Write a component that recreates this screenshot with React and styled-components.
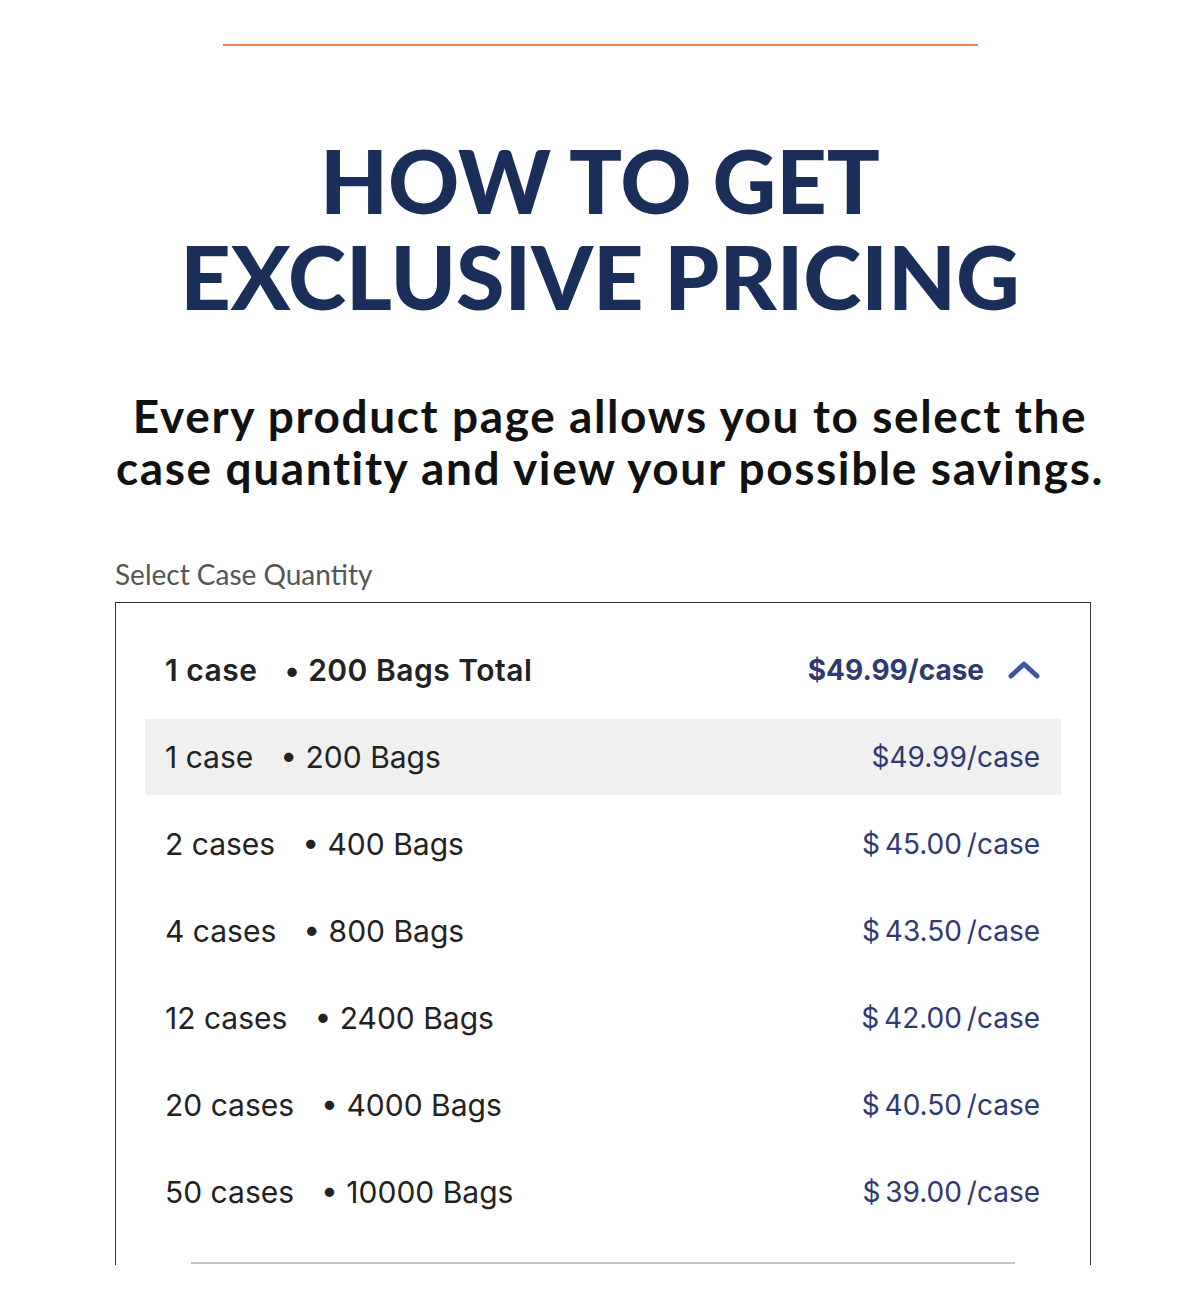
import styled, { createGlobalStyle } from 'styled-components';

const GlobalStyle = createGlobalStyle`
    body {
        margin: 0;
        background: #fff;
        font-family: "Lato", "Liberation Sans", sans-serif;
    }
`

const Page = styled.div`
    width: 1200px;
    height: 1301px;
    display: flex;
    flex-direction: column;
    align-items: center;
    overflow: hidden;
`

const Rule = styled.div`
    width: 755px;
    height: 2px;
    background: #f47b4f;
    margin-top: 44px;
`

const Heading = styled.h1`
    margin: 86px 0 0;
    font-family: "Lato", sans-serif;
    font-weight: 900;
    font-size: 88px;
    line-height: 96px;
    color: #1a2e5a;
    text-align: center;
`

const Subtitle = styled.p`
    margin: 66px 0 0;
    padding-left: 20px;
    font-family: "Lato", sans-serif;
    font-weight: 700;
    font-size: 46px;
    line-height: 52px;
    letter-spacing: 1.6px;
    color: #111;
    text-align: center;
`

const Selector = styled.div`
    align-self: stretch;
    margin: 62px 109px 0 115px;
    display: flex;
    flex-direction: column;
`

const Label = styled.div`
    font-family: "Lato", sans-serif;
    font-size: 28px;
    line-height: 36px;
    color: #555;
    margin-bottom: 10px;
`

const Box = styled.div`
    border: 1px solid #333;
    border-bottom: none;
    padding: 29px 29px 0;
    height: 633px;
    display: flex;
    flex-direction: column;
    gap: 11px;
`

const Row = styled.div`
    height: 76px;
    flex-shrink: 0;
    display: flex;
    align-items: center;
    padding: 0 21px 0 20px;
    background: ${props => props.active ? '#f0f0f0' : 'transparent'};
    font-family: "Inter", sans-serif;
    font-size: 30px;
    font-weight: ${props => props.bold ? 600 : 400};
    letter-spacing: ${props => props.bold ? '0.5px' : '0'};
    color: #222;
`

const Qty = styled.span`
    margin-right: 27px;
`

const Bags = styled.span`
    flex: 1;
`

const Price = styled.span`
    color: #2e3a70;
    font-size: 28px;
    letter-spacing: 0;
    word-spacing: -3px;
    font-weight: ${props => props.bold ? 700 : 400};
`

const Chevron = styled.svg`
    margin-left: 24px;
    width: 32px;
    height: 20px;
`

const Divider = styled.div`
    height: 2px;
    background: #c4c4c4;
    margin: 21px 46px 0;
`

const options = [
    { qty: '1 case', bags: '200 Bags', price: '$49.99/case', active: true },
    { qty: '2 cases', bags: '400 Bags', price: '$ 45.00 /case' },
    { qty: '4 cases', bags: '800 Bags', price: '$ 43.50 /case' },
    { qty: '12 cases', bags: '2400 Bags', price: '$ 42.00 /case' },
    { qty: '20 cases', bags: '4000 Bags', price: '$ 40.50 /case' },
    { qty: '50 cases', bags: '10000 Bags', price: '$ 39.00 /case' },
]

const App = () => {
    return (
        <Page>
            <GlobalStyle />
            <Rule />
            <Heading>HOW TO GET<br />EXCLUSIVE PRICING</Heading>
            <Subtitle>Every product page allows you to select the<br />case quantity and view your possible savings.</Subtitle>
            <Selector>
                <Label>Select Case Quantity</Label>
                <Box>
                    <Row bold>
                        <Qty>1 case</Qty>
                        <Bags>• 200 Bags Total</Bags>
                        <Price bold>$49.99/case</Price>
                        <Chevron viewBox="0 0 32 20">
                            <polyline points="3,16 16,4 29,16" fill="none" stroke="#3b57a4" strokeWidth="5" strokeLinecap="round" strokeLinejoin="round" />
                        </Chevron>
                    </Row>
                    {options.map(o => (
                        <Row key={o.qty} active={o.active}>
                            <Qty>{o.qty}</Qty>
                            <Bags>• {o.bags}</Bags>
                            <Price>{o.price}</Price>
                        </Row>
                    ))}
                    <Divider />
                </Box>
            </Selector>
        </Page>
    )
}

export default App
